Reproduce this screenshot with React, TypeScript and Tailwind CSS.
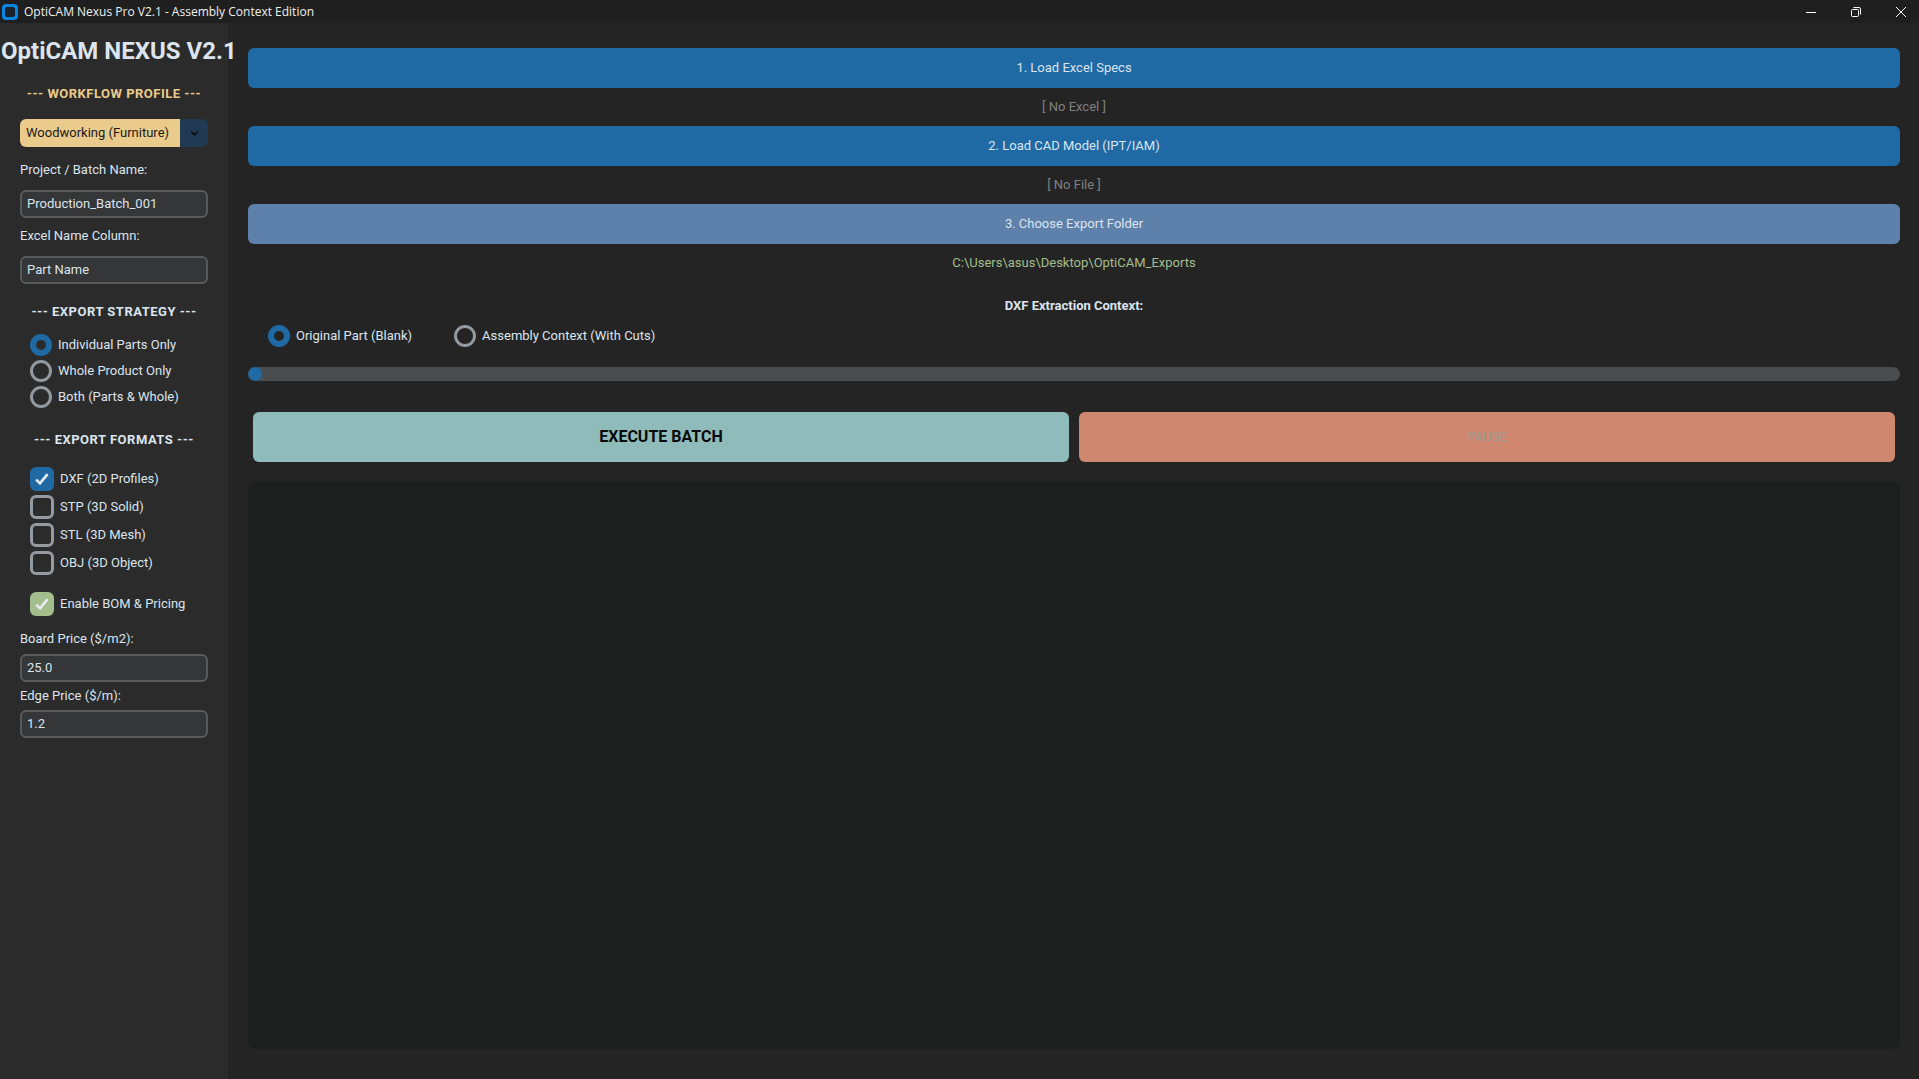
const labelFont = "font-['Roboto',sans-serif]";

function SectionHeading({ text, color = "text-[#dce4ee]", className = "" }: { text: string; color?: string; className?: string }) {
  return <div className={`text-center text-[13px] leading-[18px] font-bold tracking-[0.5px] ${color} ${className}`}>{text}</div>;
}

function TextField({ label, value, labelClass }: { label: string; value: string; labelClass: string }) {
  return (
    <div>
      <div className={`text-[13px] leading-[18px] text-[#dce4ee] ${labelClass}`}>{label}</div>
      <div className="h-[28px] rounded-[6px] border-2 border-[#565b5e] bg-[#343638] pl-[5px] text-[13px] leading-[24px] text-[#dce4ee]">{value}</div>
    </div>
  );
}

function Radio({ label, checked }: { label: string; checked?: boolean }) {
  return (
    <div className="flex h-[22px] items-center gap-[6px]">
      <span className={`size-[22px] rounded-full ${checked ? "border-[6px] border-[#1f6aa5]" : "border-[3px] border-[#949a9f]"}`} />
      <span className="text-[13px] text-[#dce4ee]">{label}</span>
    </div>
  );
}

function Check({ label, checked, color = "bg-[#1f6aa5]" }: { label: string; checked?: boolean; color?: string }) {
  return (
    <div className="flex h-[24px] items-center gap-[6px]">
      <span className={`flex size-[24px] items-center justify-center rounded-[6px] ${checked ? color : "border-[3px] border-[#949a9f]"}`}>
        {checked && (
          <svg viewBox="0 0 16 16" className="size-[16px]" fill="none" stroke="#e8ecef" strokeWidth="2.6">
            <path d="M2.2 8.6 L6 12.4 L13.6 3.2" />
          </svg>
        )}
      </span>
      <span className="text-[13px] text-[#dce4ee]">{label}</span>
    </div>
  );
}

function BlueButton({ text, color }: { text: string; color: string }) {
  return <div className={`flex h-[40px] items-center justify-center rounded-[6px] text-[13px] text-[#dce4ee] ${color}`}>{text}</div>;
}

function Status({ text, color }: { text: string; color: string }) {
  return <div className={`flex h-[38px] items-center justify-center text-[13px] ${color}`}>{text}</div>;
}

export default function App() {
  return (
    <div className={`flex h-[1079px] w-[1919px] flex-col overflow-hidden bg-[#242424] ${labelFont}`}>
      {/* title bar */}
      <div className="flex h-[23px] shrink-0 items-center bg-[#1f1f1f] pl-[2px] text-white">
        <span className="flex size-[16px] items-center justify-center rounded-[4px] bg-[#0a84e0]">
          <span className="size-[10px] rounded-[2px] bg-[#1b2229]" />
        </span>
        <span className="ml-[6px] font-['Open_Sans',sans-serif] text-[12px] text-[#f0f0f0]">OptiCAM Nexus Pro V2.1 - Assembly Context Edition</span>
        <div className="ml-auto flex items-center gap-[35px] pr-[13px]">
          <svg viewBox="0 0 10 10" className="size-[10px]" stroke="#fff" strokeWidth="1"><path d="M0 5.5 H10" /></svg>
          <svg viewBox="0 0 10 10" className="size-[10px]" fill="none" stroke="#fff" strokeWidth="1">
            <rect x="0.5" y="2.5" width="7" height="7" rx="1" />
            <path d="M2.5 0.5 H8 Q9.5 0.5 9.5 2 V7.5" />
          </svg>
          <svg viewBox="0 0 10 10" className="size-[10px]" stroke="#fff" strokeWidth="1"><path d="M0 0 L10 10 M10 0 L0 10" /></svg>
        </div>
      </div>

      <div className="flex min-h-0 flex-1">
        {/* sidebar */}
        <div className="w-[228px] shrink-0 bg-[#2b2b2b]">
          <div className="mt-[14px] whitespace-nowrap pl-px text-[24px] leading-[28px] font-bold text-[#dce4ee]">OptiCAM NEXUS V2.1</div>
          <SectionHeading text="--- WORKFLOW PROFILE ---" color="text-[#ebcb8b]" className="mt-[20px]" />
          <div className="mx-[20px] mt-[16px] flex h-[28px] overflow-hidden rounded-[6px]">
            <div className="flex-1 bg-[#ebcb8b] pl-[6px] text-[13px] leading-[28px] text-[#1a1a1a]">Woodworking (Furniture)</div>
            <div className="flex w-[28px] items-center justify-center bg-[#1f3a52]">
              <svg viewBox="0 0 10 6" className="h-[5px] w-[9px]" fill="none" stroke="#0c0c0c" strokeWidth="2"><path d="M1 1 L5 4.5 L9 1" /></svg>
            </div>
          </div>
          <div className="mx-[20px] mt-[14px] flex flex-col gap-[9px]">
            <TextField label="Project / Batch Name:" value="Production_Batch_001" labelClass="mb-[11px]" />
            <TextField label="Excel Name Column:" value="Part Name" labelClass="mb-[11px]" />
          </div>
          <SectionHeading text="--- EXPORT STRATEGY ---" className="mt-[19px]" />
          <div className="mt-[13px] ml-[30px] flex flex-col gap-[4px]">
            <Radio label="Individual Parts Only" checked />
            <Radio label="Whole Product Only" />
            <Radio label="Both (Parts & Whole)" />
          </div>
          <SectionHeading text="--- EXPORT FORMATS ---" className="mt-[23px]" />
          <div className="mt-[18px] ml-[30px] flex flex-col gap-[4px]">
            <Check label="DXF (2D Profiles)" checked />
            <Check label="STP (3D Solid)" />
            <Check label="STL (3D Mesh)" />
            <Check label="OBJ (3D Object)" />
          </div>
          <div className="mt-[17px] ml-[30px]">
            <Check label="Enable BOM & Pricing" checked color="bg-[#a3be8c]" />
          </div>
          <div className="mx-[20px] mt-[14px] flex flex-col gap-[5px]">
            <TextField label="Board Price ($/m2):" value="25.0" labelClass="mb-[6px]" />
            <TextField label="Edge Price ($/m):" value="1.2" labelClass="mb-[5px]" />
          </div>
        </div>

        {/* main */}
        <div className="flex min-w-0 flex-1 flex-col pt-[25px] pr-[19px] pl-[20px]">
          <BlueButton text="1. Load Excel Specs" color="bg-[#1f6aa5]" />
          <Status text="[ No Excel ]" color="text-[#808080]" />
          <BlueButton text="2. Load CAD Model (IPT/IAM)" color="bg-[#1f6aa5]" />
          <Status text="[ No File ]" color="text-[#808080]" />
          <BlueButton text="3. Choose Export Folder" color="bg-[#5e81ac]" />
          <Status text="C:\Users\asus\Desktop\OptiCAM_Exports" color="text-[#a3be8c]" />
          <div className="mt-[15px] text-center text-[13px] leading-[18px] font-bold text-[#dce4ee]">DXF Extraction Context:</div>
          <div className="mt-[10px] flex gap-[42px] pl-[20px]">
            <Radio label="Original Part (Blank)" checked />
            <Radio label="Assembly Context (With Cuts)" />
          </div>
          <div className="mt-[20px] h-[14px] overflow-hidden rounded-full bg-[#4a4d50]">
            <div className="h-full w-[14px] rounded-full bg-[#1f6aa5]" />
          </div>
          <div className="mt-[31px] flex gap-[10px] px-[5px]">
            <div className="flex h-[50px] flex-1 items-center justify-center rounded-[6px] bg-[#8fbcbb] text-[16px] font-bold text-[#0a0a0a]">EXECUTE BATCH</div>
            <div className="flex h-[50px] flex-1 items-center justify-center rounded-[6px] bg-[#d08770] text-[13px] text-[#9a9a90]">PAUSE</div>
          </div>
          <div className="mt-[19px] mb-[30px] min-h-0 flex-1 rounded-[8px] bg-[#1d1e1e]" />
        </div>
      </div>
    </div>
  );
}
